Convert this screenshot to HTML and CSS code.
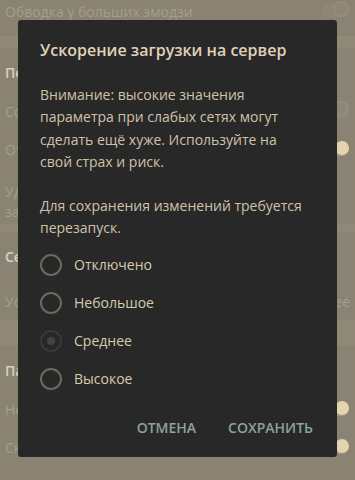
FILE: index.html
```html
<!DOCTYPE html>
<html>
<head>
<meta charset="UTF-8">
<title>Ускорение загрузки</title>
<link rel="stylesheet" href="styles.css">
</head>
<body>
<div class="settings">
	<div class="row first">
		<span class="label">Обводка у больших эмодзи</span>
		<span class="toggle off"></span>
	</div>
	<div class="band"></div>
	<div class="header">Передача файлов</div>
	<div class="row">
		<span class="label">Сохранять в загрузки</span>
		<span class="toggle off"></span>
	</div>
	<div class="row">
		<span class="label">Открывать файлы сразу</span>
		<span class="toggle on"></span>
	</div>
	<div class="row tall">
		<span class="label">Удалять временные файлы<br>загрузки</span>
	</div>
	<div class="band thin"></div>
	<div class="header">Сеть</div>
	<div class="row spaced">
		<span class="label">Ускорение загрузки на сервер</span>
		<span class="value">Среднее</span>
	</div>
	<div class="band wide"></div>
	<div class="header">Параметры</div>
	<div class="row">
		<span class="label">Недавние стикеры</span>
		<span class="toggle on"></span>
	</div>
	<div class="row">
		<span class="label">Сквозное шифрование</span>
		<span class="toggle on"></span>
	</div>
	<div class="row last">
		<span class="label"></span>
		<span class="toggle off"></span>
	</div>
</div>

<div class="dialog">
	<h1>Ускорение загрузки на сервер</h1>
	<p>Внимание: высокие значения параметра при слабых сетях могут сделать ещё хуже. Используйте на свой страх и риск.</p>
	<p>Для сохранения изменений требуется перезапуск.</p>
	<ul class="options">
		<li><span class="radio"></span>Отключено</li>
		<li><span class="radio"></span>Небольшое</li>
		<li><span class="radio checked"></span>Среднее</li>
		<li><span class="radio"></span>Высокое</li>
	</ul>
	<div class="buttons">
		<span>ОТМЕНА</span>
		<span>СОХРАНИТЬ</span>
	</div>
</div>
</body>
</html>
```

FILE: styles.css
```css
body {
	margin : 0;
	background-color : #8a8272;
	font-family : "Open Sans", "Liberation Sans", sans-serif;
	overflow : hidden;
	height : 480px;
	position : relative;
}
.settings {
	display : flex;
	flex-direction : column;
}
.row {
	display : flex;
	flex-shrink : 0;
	align-items : center;
	justify-content : space-between;
	height : 38px;
	padding : 0 5px;
	font-size : 14px;
	color : #a49f89;
}
.row.first {
	height : 22px;
	margin-bottom : 14px;
}
.row.tall {
	height : 42px;
	align-items : flex-start;
	padding-top : 14px;
	line-height : 20px;
}
.row.spaced {
	margin-top : 6px;
}
.row.last {
	padding-top : 6px;
}
.label {
	white-space : nowrap;
}
.value {
	color : #a49f89;
}
.band {
	flex-shrink : 0;
	height : 12px;
	background-color : #918978;
}
.band.thin {
	height : 8px;
}
.band.wide {
	height : 26px;
}
.header {
	flex-shrink : 0;
	height : 30px;
	padding : 14px 5px 0 5px;
	line-height : 22px;
	font-size : 14px;
	font-weight : 600;
	color : #d9d0bd;
}
.toggle {
	position : relative;
	width : 28px;
	height : 14px;
	border-radius : 8px;
	margin-right : 1px;
}
.toggle.off {
	background-color : #8f8775;
}
.toggle.off::after {
	content : "";
	position : absolute;
	right : 0;
	top : -3px;
	width : 16px;
	height : 16px;
	border : 2px solid #958d7b;
	border-radius : 50%;
	box-sizing : border-box;
}
.toggle.on {
	background-color : #a0967f;
}
.toggle.on::after {
	content : "";
	position : absolute;
	right : 0;
	top : -1px;
	width : 14px;
	height : 14px;
	background-color : #e2d4ae;
	border-radius : 50%;
}
.dialog {
	position : absolute;
	left : 18px;
	top : 20px;
	width : 319px;
	height : 437px;
	box-sizing : border-box;
	padding : 18px 22px 0 22px;
	background-color : #282828;
	border-radius : 3px;
	display : flex;
	flex-direction : column;
	color : #d0c2a8;
}
h1 {
	margin : 0;
	font-size : 16px;
	font-weight : 600;
	line-height : 24px;
	color : #e0d2b6;
}
p {
	margin : 22px 8px 0 0;
	font-size : 14px;
	line-height : 22.3px;
}
.options {
	list-style : none;
	margin : 14px 0 0 0;
	padding : 0;
	display : flex;
	flex-direction : column;
	gap : 16px;
}
.options li {
	display : flex;
	align-items : center;
	gap : 12px;
	height : 22px;
	font-size : 14px;
	color : #d8caae;
}
.radio {
	width : 22px;
	height : 22px;
	border : 2px solid #6f685c;
	border-radius : 50%;
	box-sizing : border-box;
	display : flex;
	align-items : center;
	justify-content : center;
}
.radio.checked {
	border-color : #3b3936;
}
.radio.checked::after {
	content : "";
	width : 8px;
	height : 8px;
	border-radius : 50%;
	background-color : #45423e;
}
.buttons {
	display : flex;
	justify-content : flex-end;
	gap : 32px;
	margin-top : 28px;
	padding-right : 2px;
	font-size : 14px;
	font-weight : 600;
	color : #8da29f;
}
```
